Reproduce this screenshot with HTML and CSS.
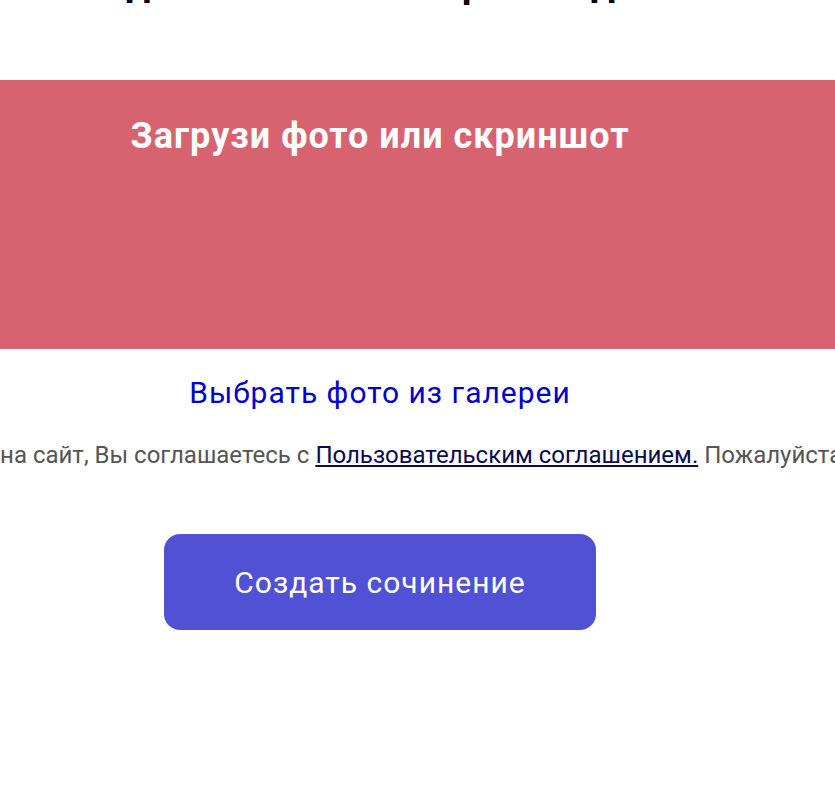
FILE: index.html
```html
<!DOCTYPE html>
<html lang="ru">
<head>
<meta charset="utf-8">
<title>Сочинение по фото</title>
<link rel="stylesheet" href="styles.css">
</head>
<body>
<div class="page">
  <header class="top">
    <h1 class="title">Создай сочинение по фото задания</h1>
  </header>
  <section class="banner">
    <div class="banner-inner">
      <h2 class="banner-title">Загрузи фото или скриншот</h2>
    </div>
  </section>
  <div class="column">
    <a class="gallery" href="#">Выбрать фото из галереи</a>
  </div>
  <div class="column agree-row">
    <p class="agree">Загружая фото задания на сайт, Вы соглашаетесь с <a href="#" class="agree-link">Пользовательским соглашением.</a> Пожалуйста, не загружайте в</p>
  </div>
  <div class="column">
    <button class="create" type="button">Создать сочинение</button>
  </div>
</div>
</body>
</html>
```
FILE: styles.css
```css
html, body {
  margin: 0;
  padding: 0;
  background: #ffffff;
  overflow: hidden;
}
body {
  font-family: Roboto, "Noto Sans", "Liberation Sans", sans-serif;
  width: 835px;
  height: 806px;
}
.page {
  display: flex;
  flex-direction: column;
}
.top {
  width: 760px;
  height: 80px;
  display: flex;
  justify-content: center;
  overflow: hidden;
}
.title {
  margin: -38px 0 0 0;
  font-size: 38px;
  line-height: 44px;
  font-weight: 700;
  color: #000;
  white-space: nowrap;
}
.banner {
  height: 269px;
  background: #d6636f;
}
.banner-inner {
  width: 760px;
  display: flex;
  justify-content: center;
  padding-top: 34px;
}
.banner-title {
  margin: 0;
  font-size: 36px;
  line-height: 44px;
  font-weight: 700;
  letter-spacing: 1px;
  color: #ffffff;
}
.column {
  width: 760px;
  display: flex;
  justify-content: center;
}
.gallery {
  margin-top: 24px;
  font-size: 30px;
  line-height: 40px;
  letter-spacing: 1px;
  color: #0000cc;
  text-decoration: none;
}
.agree-row {
  margin-top: 28px;
}
.agree {
  margin: 0;
  flex-shrink: 0;
  white-space: nowrap;
  font-size: 24px;
  line-height: 28px;
  color: #555555;
}
.agree-link {
  color: #0a0a50;
  text-decoration: underline;
}
.create {
  margin-top: 65px;
  width: 432px;
  height: 96px;
  border: none;
  border-radius: 16px;
  background: #5151d6;
  color: #ffffff;
  font-family: Roboto, "Noto Sans", "Liberation Sans", sans-serif;
  font-size: 30px;
  letter-spacing: 1px;
  cursor: pointer;
}
```
